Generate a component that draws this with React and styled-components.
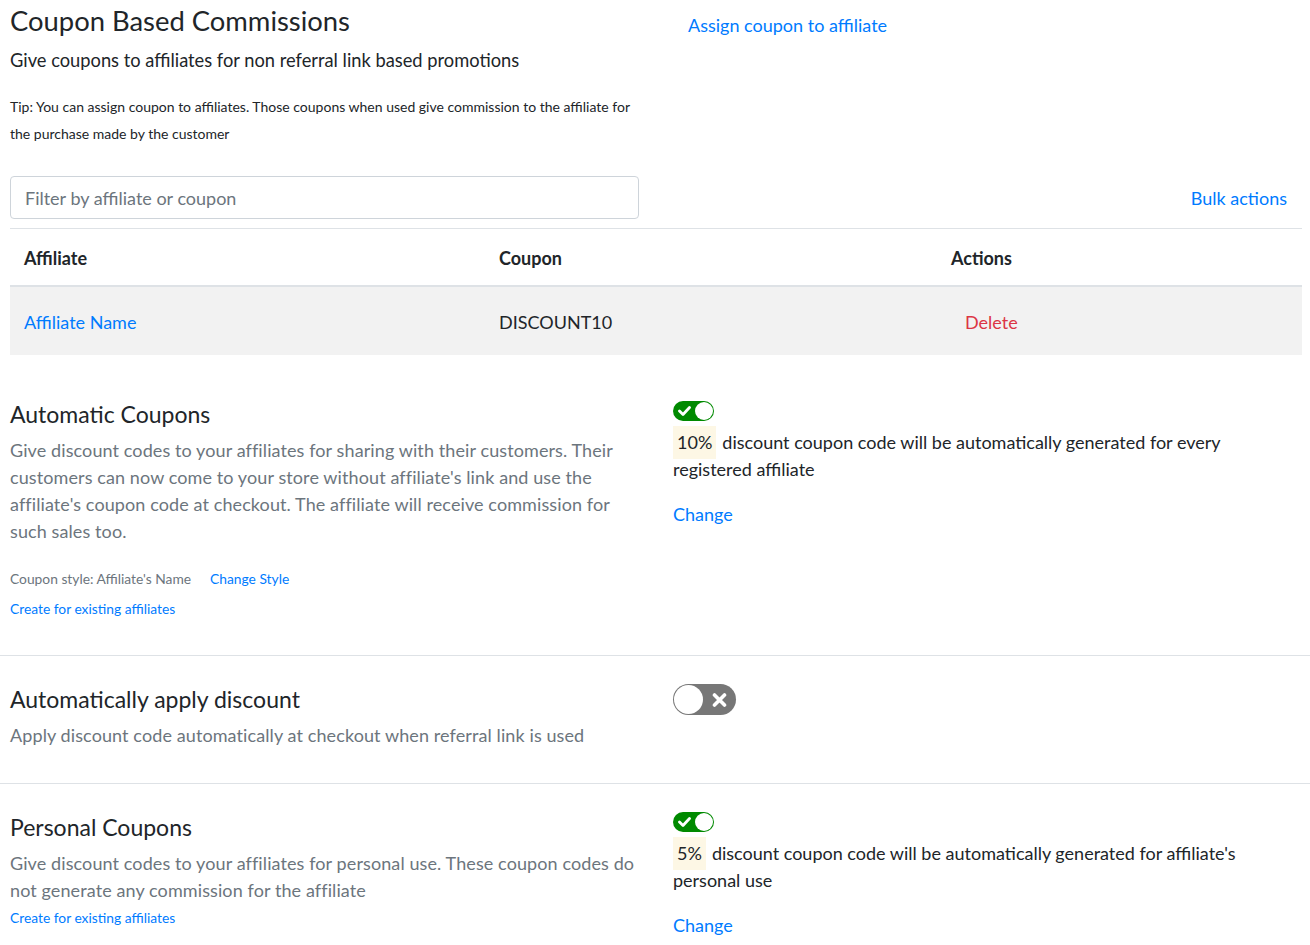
import styled, { createGlobalStyle } from "styled-components";

const GlobalStyle = createGlobalStyle`
  body {
    margin: 0;
    background: #fff;
    font-family: Lato, "Open Sans", sans-serif;
    color: #212529;
  }
  * { box-sizing: border-box; }
`;

const blue = "#007bff";

const Page = styled.div`
  padding: 0 8px 0 10px;
  width: 1310px;
`;

const TwoCol = styled.div`
  display: grid;
  grid-template-columns: 630px 1fr;
  column-gap: 33px;
  align-items: start;
`;

const Title = styled.h2`
  margin: 0;
  padding-top: 4px;
  font-size: 27.4px;
  font-weight: 400;
  line-height: 34px;
  color: #212529;
`;

const Subtitle = styled.p`
  margin: 9px 0 0;
  font-size: 18.3px;
  line-height: 26px;
`;

const Tip = styled.p`
  margin: 20px 0 0;
  font-size: 14px;
  line-height: 27px;
`;

const Link = styled.a`
  color: ${blue};
  font-size: ${({ size }) => size || 18}px;
  text-decoration: none;
  cursor: pointer;
`;

const AssignWrap = styled.div`
  padding: 12px 0 0 15px;
  line-height: 26px;
`;

const FilterRow = styled.div`
  display: grid;
  grid-template-columns: 630px 1fr;
  column-gap: 33px;
  align-items: center;
  margin-top: 29px;
  padding-bottom: 9px;
  border-bottom: 1px solid #dee2e6;
`;

const FilterInput = styled.input`
  width: 629px;
  height: 43px;
  border: 1px solid #ced4da;
  border-radius: 4px;
  padding: 0 14px;
  font-family: inherit;
  font-size: 18px;
  color: #495057;
  &::placeholder { color: #6c757d; }
`;

const BulkWrap = styled.div`
  text-align: right;
  padding-right: 15px;
`;

const Table = styled.table`
  width: 100%;
  border-collapse: collapse;
  font-size: 18px;
`;

const Th = styled.th`
  text-align: left;
  font-weight: 700;
  width: ${({ w }) => w}px;
  height: 57px;
  padding: 2px 14px 0;
  border-bottom: 2px solid #dee2e6;
`;

const Tr = styled.tr`
  background: #f2f2f2;
`;

const Td = styled.td`
  height: 69px;
  padding: 2px 14px 0 ${({ pl }) => pl || 14}px;
`;

const DeleteLink = styled.a`
  color: #dc3545;
  cursor: pointer;
`;

const Section = styled.div`
  margin: 0 -8px 0 -10px;
  padding: ${({ pad }) => pad};
  border-bottom: ${({ last }) => (last ? "none" : "1px solid #dee2e6")};
`;

const SectionInner = styled(TwoCol)`
  padding: 0 8px 0 10px;
`;

const SectionTitle = styled.h4`
  margin: 0;
  font-size: 23px;
  font-weight: 400;
  line-height: 30px;
  color: #212529;
`;

const Desc = styled.p`
  margin: 8px 0 0;
  font-size: 18px;
  letter-spacing: 0.1px;
  line-height: 27px;
  color: #6c757d;
`;

const Small = styled.div`
  margin-top: ${({ mt }) => mt || 0}px;
  font-size: 13.8px;
  line-height: 24px;
  color: #6c757d;
  display: flex;
  gap: 19px;
  align-items: baseline;
`;

const Statement = styled.p`
  margin: 8px 0 0;
  font-size: 18px;
  line-height: 27px;
  color: #212529;
`;

const Percent = styled.span`
  display: inline-block;
  background: #fdf7e5;
  padding: 3px 4px;
  margin: -3px 6px -3px 0;
  line-height: 27px;
`;

const ChangeWrap = styled.div`
  margin-top: ${({ mt }) => mt}px;
  line-height: 27px;
`;

const SwitchTrack = styled.span`
  position: relative;
  display: inline-flex;
  align-items: center;
  width: ${({ big }) => (big ? 63 : 41)}px;
  height: ${({ big }) => (big ? 31 : 20)}px;
  border-radius: 999px;
  background: ${({ on }) => (on ? "#008a00" : "#777")};
`;

const Knob = styled.span`
  position: absolute;
  top: 1px;
  ${({ on }) => (on ? "right: 1px;" : "left: 1px;")}
  width: ${({ big }) => (big ? 29 : 18)}px;
  height: ${({ big }) => (big ? 29 : 18)}px;
  border-radius: 50%;
  background: #fff;
`;

const SwitchIcon = styled.svg`
  position: absolute;
  top: 50%;
  transform: translateY(-50%);
  ${({ on }) => (on ? "left: 5px;" : "right: 9px;")}
`;

function Switch({ on, big }) {
  return (
    <SwitchTrack on={on ? 1 : 0} big={big ? 1 : 0}>
      {on ? (
        <SwitchIcon on={1} width="13" height="11" viewBox="0 0 13 11">
          <path d="M1.5 5.5 L5 9 L11.5 2" fill="none" stroke="#fff" strokeWidth="2.8" strokeLinecap="round" strokeLinejoin="round" />
        </SwitchIcon>
      ) : (
        <SwitchIcon on={0} width="15" height="15" viewBox="0 0 15 15">
          <path d="M2.5 2.5 L12.5 12.5 M12.5 2.5 L2.5 12.5" stroke="#fff" strokeWidth="3.6" strokeLinecap="round" />
        </SwitchIcon>
      )}
      <Knob on={on ? 1 : 0} big={big ? 1 : 0} />
    </SwitchTrack>
  );
}

const SwitchRow = styled.div`
  display: flex;
  padding-top: ${({ pt }) => pt || 0}px;
`;

export default function App() {
  return (
    <Page>
      <GlobalStyle />
      <TwoCol>
        <div>
          <Title>Coupon Based Commissions</Title>
          <Subtitle>Give coupons to affiliates for non referral link based promotions</Subtitle>
          <Tip>
            Tip: You can assign coupon to affiliates. Those coupons when used give commission to the affiliate for
            the purchase made by the customer
          </Tip>
        </div>
        <AssignWrap>
          <Link>Assign coupon to affiliate</Link>
        </AssignWrap>
      </TwoCol>

      <FilterRow>
        <FilterInput placeholder="Filter by affiliate or coupon" />
        <BulkWrap>
          <Link>Bulk actions</Link>
        </BulkWrap>
      </FilterRow>

      <Table>
        <thead>
          <tr>
            <Th w={475}>Affiliate</Th>
            <Th w={452}>Coupon</Th>
            <Th>Actions</Th>
          </tr>
        </thead>
        <tbody>
          <Tr>
            <Td><Link>Affiliate Name</Link></Td>
            <Td>DISCOUNT10</Td>
            <Td pl={28}><DeleteLink>Delete</DeleteLink></Td>
          </Tr>
        </tbody>
      </Table>

      <Section pad="44px 0 34px">
        <SectionInner>
          <div>
            <SectionTitle>Automatic Coupons</SectionTitle>
            <Desc>
              Give discount codes to your affiliates for sharing with their customers. Their customers can now come
              to your store without affiliate's link and use the affiliate's coupon code at checkout. The affiliate
              will receive commission for such sales too.
            </Desc>
            <Small mt={22}>
              <span>Coupon style: Affiliate's Name</span>
              <Link size={13.8}>Change Style</Link>
            </Small>
            <Small mt={6}>
              <Link size={13.8}>Create for existing affiliates</Link>
            </Small>
          </div>
          <div>
            <SwitchRow pt={2}>
              <Switch on />
            </SwitchRow>
            <Statement>
              <Percent>10%</Percent>discount coupon code will be automatically generated for every registered
              affiliate
            </Statement>
            <ChangeWrap mt={18}>
              <Link>Change</Link>
            </ChangeWrap>
          </div>
        </SectionInner>
      </Section>

      <Section pad="28px 0 34px">
        <SectionInner>
          <div>
            <SectionTitle>Automatically apply discount</SectionTitle>
            <Desc>Apply discount code automatically at checkout when referral link is used</Desc>
          </div>
          <SwitchRow>
            <Switch big />
          </SwitchRow>
        </SectionInner>
      </Section>

      <Section pad="28px 0 10px" last>
        <SectionInner>
          <div>
            <SectionTitle>Personal Coupons</SectionTitle>
            <Desc>
              Give discount codes to your affiliates for personal use. These coupon codes do not generate any
              commission for the affiliate
            </Desc>
            <Small mt={2}>
              <Link size={13.8}>Create for existing affiliates</Link>
            </Small>
          </div>
          <div>
            <SwitchRow>
              <Switch on />
            </SwitchRow>
            <Statement>
              <Percent>5%</Percent>discount coupon code will be automatically generated for affiliate's personal
              use
            </Statement>
            <ChangeWrap mt={18}>
              <Link>Change</Link>
            </ChangeWrap>
          </div>
        </SectionInner>
      </Section>
    </Page>
  );
}
